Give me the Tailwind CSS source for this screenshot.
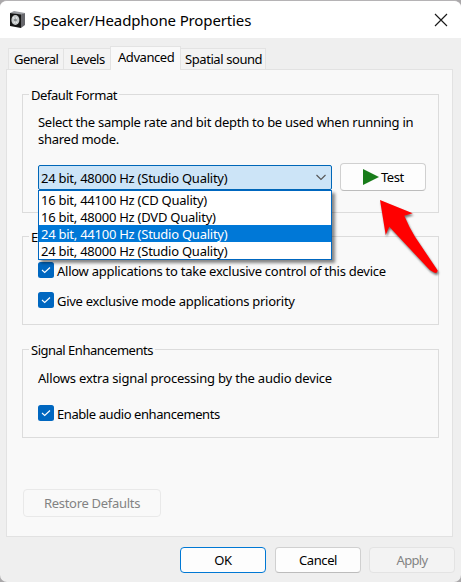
<!DOCTYPE html>
<html lang="en">
<head>
<meta charset="utf-8">
<title>Speaker/Headphone Properties</title>
<script src="https://cdn.jsdelivr.net/npm/@tailwindcss/browser@4"></script>
</head>
<body class="w-[461px] h-[582px] overflow-hidden bg-[#aaa8aa] font-['Noto_Sans','Open_Sans',sans-serif] text-[13px] leading-4 tracking-[-0.25px] text-black whitespace-nowrap">
<main class="flex flex-col w-[461px] h-[582px] border-t border-[#b5b3b5] rounded-[7px] bg-[#efefef] overflow-hidden">
  <header class="flex items-center h-[37px] shrink-0 bg-white pl-[10px] pr-[13px]">
    <svg class="mt-[1px]" width="16" height="18" viewBox="0 0 16 18"><path d="M0 2 4 0 15 2 11 4Z" fill="#999ba0"/><path d="M11 3.5 15 2V14L11 17Z" fill="#66666b"/><path d="M0 2 11 3.5V17L0 15Z" fill="#151515"/><ellipse cx="5.4" cy="9" rx="4" ry="5" fill="#c5c9ca"/><path d="M3 6 7 12M7 6 4 12" stroke="#eee"/><circle cx="5.4" cy="9" r="1.5" fill="#8b9091"/></svg>
    <h1 class="ml-[7px] text-[15px] leading-5 font-normal tracking-[-0.13px]">Speaker/Headphone Properties</h1>
    <svg class="ml-auto" width="14" height="14" viewBox="0 0 14 14"><path d="m1 1 12 12M13 1 1 13" stroke="#191919" stroke-width="1.15"/></svg>
  </header>
  <nav class="flex items-end h-[31px] shrink-0 pl-2 tracking-[-0.45px]">
    <div class="w-[56px] h-[21px] border border-b-0 border-[#e3e3e3] bg-[#f3f3f3] pl-[5px] pt-[2px]"><span class="tracking-[-0.5px]">General</span></div>
    <div class="w-[46px] h-[21px] border-t border-[#e3e3e3] bg-[#f3f3f3] pl-[6px] pt-[2px]"><span>Levels</span></div>
    <div class="relative w-[71px] h-[24px] -mb-[1px] border border-b-0 border-[#e3e3e3] bg-[#f9f9f9] pl-[7px] pt-[2px]"><span>Advanced</span></div>
    <div class="w-[85px] h-[21px] border-t border-r border-[#e3e3e3] bg-[#f3f3f3] pl-[4px] pt-[2px]"><span class="tracking-[-0.42px]">Spatial sound</span></div>
  </nav>
  <section class="flex flex-col ml-[6px] w-[447px] h-[468px] shrink-0 border border-[#e2e2e2] bg-[#f9f9f9] px-[15px] pt-[17px]">
    <fieldset class="min-w-0 shrink-0 h-[126px] w-[417px] border border-[#dcdcdc] px-[15px]">
      <legend class="-ml-[9px] px-[2px] h-[15px] tracking-[-0.44px]"><span>Default Format</span></legend>
      <p class="mt-[12px] leading-[17px] tracking-[-0.27px]"><span>Select the sample rate and bit depth to be used when running in</span><br><span>shared mode.</span></p>
      <div class="flex items-start mt-[15px]">
        <div class="relative shrink-0 w-[294px] h-[25px] mt-[2px] border border-[#0067b8] rounded-[2px] bg-[#cce4f7] pl-[2px] pt-[4px]">
          <span>24 bit, 48000 Hz (Studio Quality)</span>
          <svg class="absolute right-[5px] top-[8px]" width="10" height="7" viewBox="0 0 10 7"><path d="m.5 1 4.5 4.5L9.500 1" fill="none" stroke="#555" stroke-width="1.1"/></svg>
          <ul class="absolute z-10 -left-px top-[24px] w-[294px] h-[70px] border border-[#0067c0] bg-white shadow-[3px_3px_3px_#0007] leading-[17px]">
            <li class="h-[17px] pl-[2px] pt-px"><span>16 bit, 44100 Hz (CD Quality)</span></li>
            <li class="h-[17px] pl-[2px] pt-px"><span>16 bit, 48000 Hz (DVD Quality)</span></li>
            <li class="h-[17px] pl-[2px] pt-px bg-[#0078d7] text-white"><span>24 bit, 44100 Hz (Studio Quality)</span></li>
            <li class="h-[17px] pl-[2px] pt-px"><span>24 bit, 48000 Hz (Studio Quality)</span></li>
          </ul>
        </div>
        <button class="flex items-center shrink-0 ml-[8px] w-[86px] h-[28px] border border-[#d0d0d0] border-b-[#bcbcbc] rounded-[4px] bg-[#fdfdfd] pl-[22px]"><svg width="16" height="16" viewBox="0 0 16 16"><path d="M0 0 16 8 0 16Z" fill="#187c1a"/></svg><span class="ml-[2px] tracking-[-0.5px]">Test</span></button>
      </div>
    </fieldset>
    <fieldset class="min-w-0 shrink-0 mt-[16px] h-[96px] w-[417px] border border-[#dcdcdc] px-[15px]">
      <legend class="-ml-[9px] pl-[2px] w-[93px] h-[15px]"><span>E</span></legend>
      <label class="flex items-center mt-[18px] h-4"><svg width="16" height="16" viewBox="0 0 16 16"><rect width="16" height="16" rx="2.500" fill="#0067c0"/><path d="m4 8 2.700 2.500L12 5.500" fill="none" stroke="#fff" stroke-width="1.100"/></svg><span class="ml-[3px] mt-[2px]">Allow applications to take exclusive control of this device</span></label>
      <label class="flex items-center mt-[14px] h-4"><svg width="16" height="16" viewBox="0 0 16 16"><rect width="16" height="16" rx="2.500" fill="#0067c0"/><path d="m4 8 2.700 2.500L12 5.500" fill="none" stroke="#fff" stroke-width="1.100"/></svg><span class="ml-[3px] mt-[2px] tracking-[-0.27px]">Give exclusive mode applications priority</span></label>
    </fieldset>
    <fieldset class="min-w-0 shrink-0 mt-[17px] h-[96px] w-[417px] border border-[#dcdcdc] px-[15px]">
      <legend class="-ml-[9px] px-[2px] h-[15px] tracking-[-0.49px]"><span>Signal Enhancements</span></legend>
      <p class="mt-[13px] tracking-[-0.2px]"><span>Allows extra signal processing by the audio device</span></p>
      <label class="flex items-center mt-[19px] h-4"><svg width="16" height="16" viewBox="0 0 16 16"><rect width="16" height="16" rx="2.500" fill="#0067c0"/><path d="m4 8 2.700 2.500L12 5.500" fill="none" stroke="#fff" stroke-width="1.100"/></svg><span class="ml-[3px] mt-[2px] tracking-[-0.42px]">Enable audio enhancements</span></label>
    </fieldset>
    <button class="shrink-0 mt-[51px] ml-[1px] w-[138px] h-[28px] border border-[#e9e9e9] rounded-[4px] text-[#838383] tracking-[-0.3px]"><span>Restore Defaults</span></button>
  </section>
  <footer class="flex pl-[180px] pt-[10px] tracking-[-0.4px]">
    <button class="w-[86px] h-[26px] border border-[#0078d4] rounded-[4px] bg-[#fdfdfd]"><span>OK</span></button>
    <button class="ml-[9px] w-[86px] h-[26px] border border-[#d0d0d0] border-b-[#bcbcbc] rounded-[4px] bg-[#fdfdfd]"><span>Cancel</span></button>
    <button class="ml-[8px] w-[86px] h-[26px] border border-[#e3e3e3] rounded-[4px] bg-[#f3f3f3] text-[#838383] tracking-[-0.7px]"><span>Apply</span></button>
  </footer>
</main>
<svg class="absolute left-[375px] top-[195px] z-20 drop-shadow-[1px_2px_1px_#0008]" width="68" height="84" viewBox="0 0 68 84"><path d="M5 5 37.700 18.300 29.300 20.700Q34 32 40 41.700L62.700 75.500Q62.500 79 59 77.500Q54 75 51 71L14.300 31.700 10.700 40Z" fill="#f00"/></svg>
</body>
</html>
